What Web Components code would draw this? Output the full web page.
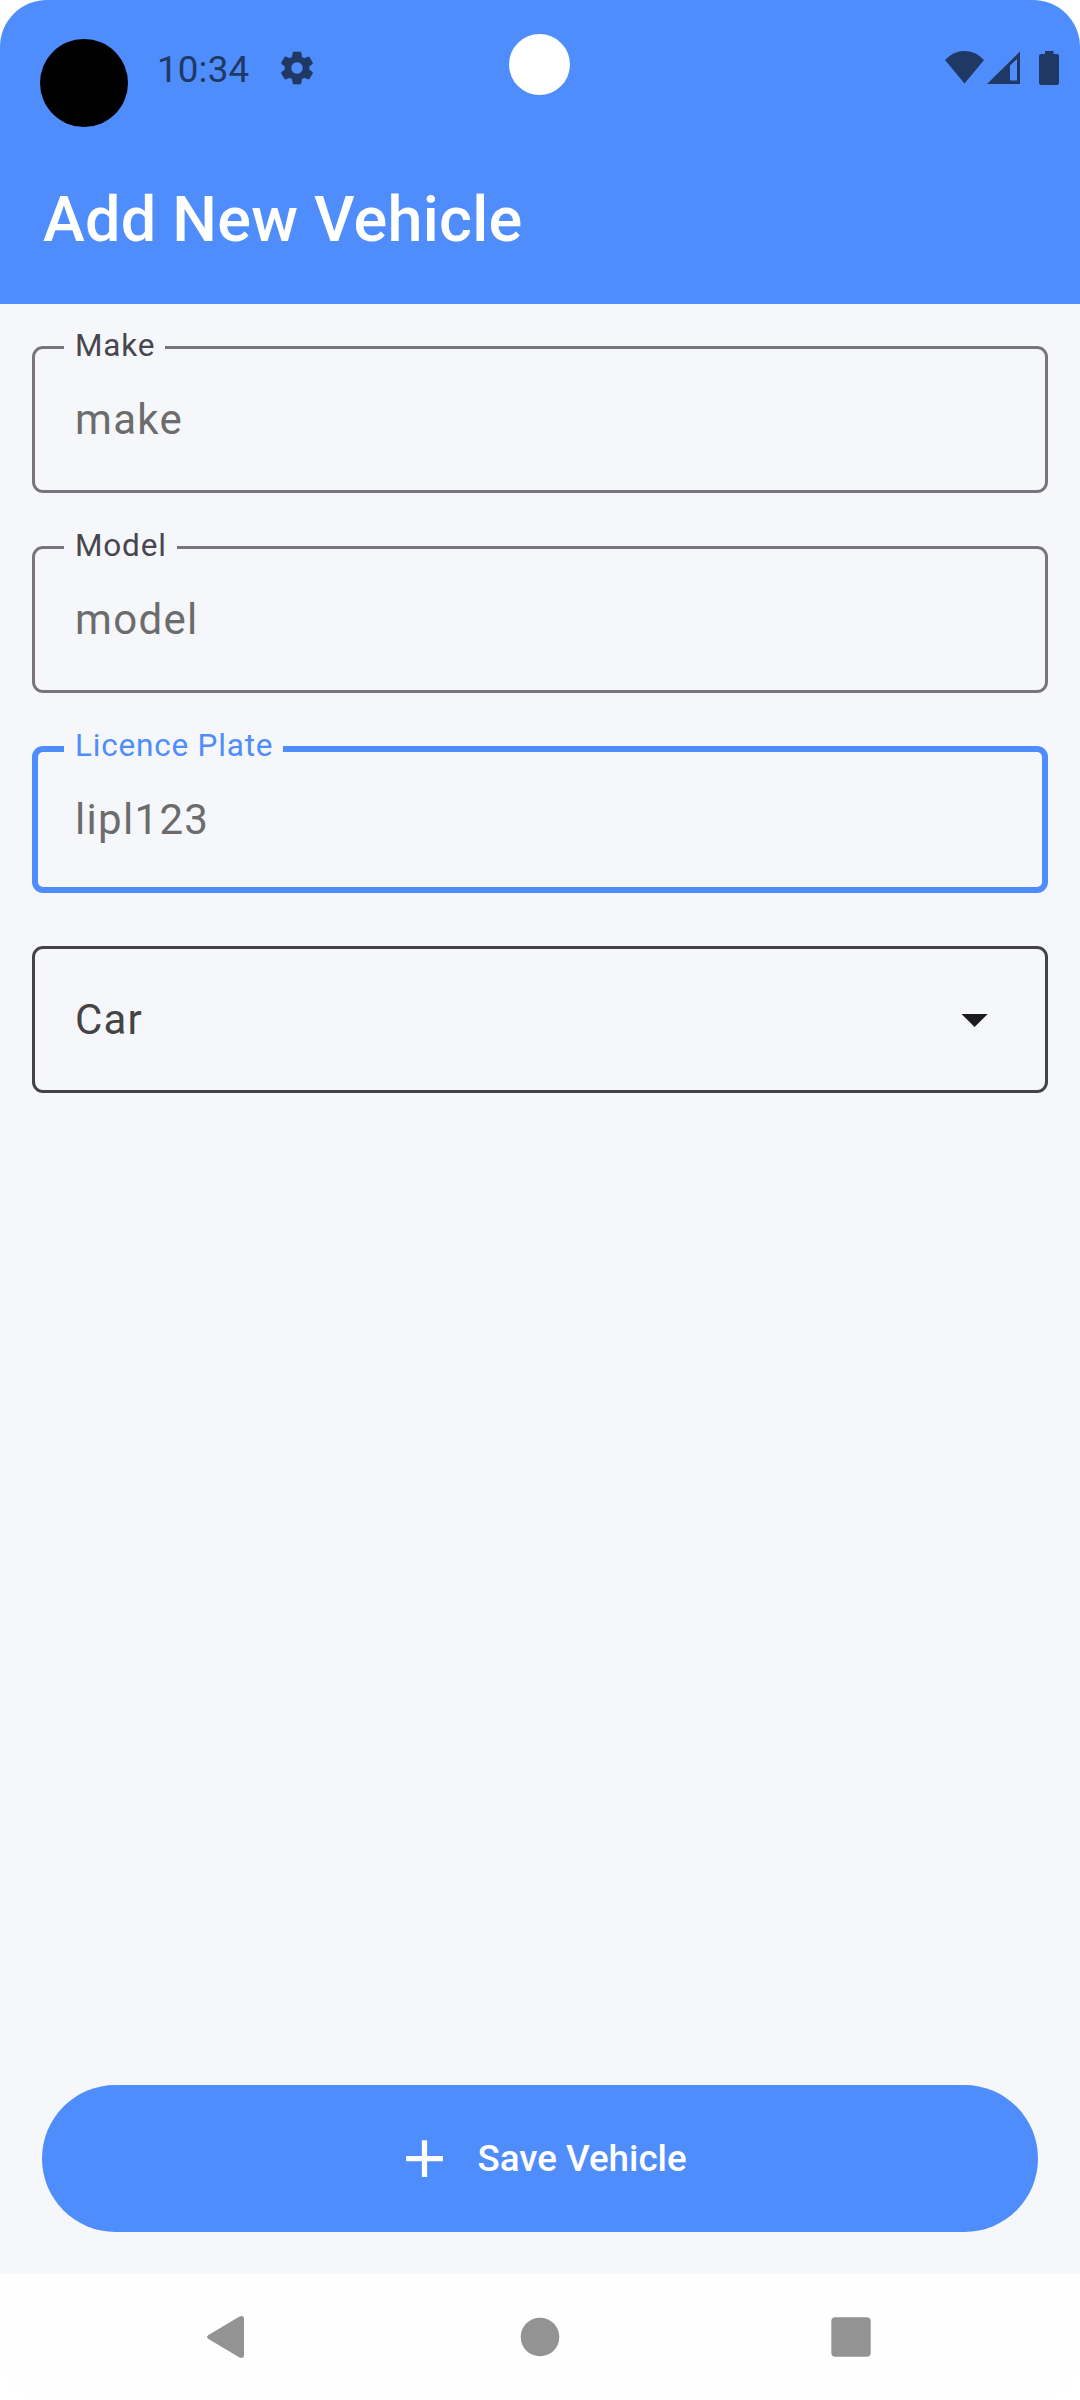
<!DOCTYPE html>
<html lang="en">
<head>
<meta charset="utf-8">
<title>Add New Vehicle</title>
<style>
  body { margin: 0; background: #fff; font-family: Roboto, sans-serif; }
</style>
</head>
<body>
<vehicle-screen>
  <status-bar slot="top" time="10:34"></status-bar>
  <app-header slot="top">Add New Vehicle</app-header>
  <outlined-field label="Make">make</outlined-field>
  <outlined-field label="Model">model</outlined-field>
  <outlined-field label="Licence Plate" focused>lipl123</outlined-field>
  <select-field>Car</select-field>
  <primary-button slot="action">Save Vehicle</primary-button>
  <nav-bar slot="bottom"></nav-bar>
</vehicle-screen>
<script>
const define = (name, html, setup) => {
  const template = document.createElement('template');
  template.innerHTML = html;
  customElements.define(name, class extends HTMLElement {
    constructor() {
      super();
      this.attachShadow({ mode: 'open' }).append(template.content.cloneNode(true));
    }
    connectedCallback() { if (setup) setup(this, this.shadowRoot); }
  });
};

define('vehicle-screen', `
<style>
  :host { --primary: #4f8dfd; --surface: #f5f7fb; --ink: #203864;
    display: flex; flex-direction: column; width: 1080px; height: 2400px;
    overflow: hidden; border-radius: 47px; background: var(--surface); }
  .top { height: 304px; background: var(--primary); }
  main { flex: 1; display: flex; flex-direction: column; gap: 53px; padding: 42px 32px 0; }
  .action { padding: 0 42px 42px; }
</style>
<div class="top"><slot name="top"></slot></div>
<main><slot></slot></main>
<div class="action"><slot name="action"></slot></div>
<slot name="bottom"></slot>`);

define('status-bar', `
<style>
  :host { display: flex; height: 136px; position: relative; color: var(--ink); box-sizing: border-box; padding: 39px 21px 0 40px; }
  .dot { width: 88px; height: 88px; border-radius: 50%; background: #000; }
  .time { margin: 9px 0 0 29px; font-size: 36.75px; line-height: 43px; width: 93px; letter-spacing: .15px; white-space: nowrap; }
  svg { display: block; fill: currentColor; }
  .gear { margin: 9px 0 0 27px; stroke: currentColor; stroke-width: .4; }
  .camera { position: absolute; left: 509px; top: 34px; width: 61px; height: 61px; border-radius: 50%; background: #fff; }
  .right { margin: 11px 0 0 auto; }
</style>
<div class="dot"></div>
<span class="time"></span>
<svg class="gear" width="40" height="40" viewBox="0 0 24 24"><path d="M19.14 12.94c.04-.3.06-.61.06-.94 0-.32-.02-.64-.07-.94l2.03-1.58a.49.49 0 0 0 .12-.61l-1.92-3.32a.488.488 0 0 0-.59-.22l-2.39.96c-.5-.38-1.03-.7-1.62-.94l-.36-2.54a.484.484 0 0 0-.48-.41h-3.84c-.24 0-.43.17-.47.41l-.36 2.54c-.59.24-1.13.57-1.62.94l-2.39-.96c-.22-.08-.47 0-.59.22L2.74 8.87c-.12.21-.08.47.12.61l2.03 1.58c-.05.3-.09.63-.09.94s.02.64.07.94l-2.03 1.58a.49.49 0 0 0-.12.61l1.92 3.32c.12.22.37.29.59.22l2.39-.96c.5.38 1.03.7 1.62.94l.36 2.54c.05.24.24.41.48.41h3.84c.24 0 .44-.17.47-.41l.36-2.54c.59-.24 1.13-.56 1.62-.94l2.39.96c.22.08.47 0 .59-.22l1.92-3.32c.12-.22.07-.47-.12-.61l-2.01-1.58zM12 15.6c-1.98 0-3.6-1.62-3.6-3.6s1.62-3.6 3.6-3.6 3.6 1.62 3.6 3.6-1.62 3.6-3.6 3.6z"/></svg>
<div class="camera"></div>
<svg class="right" width="114" height="36" viewBox="945 50 114 36">
  <path d="M945 60Q953.500 51 964.500 51T984 60L964.500 83.500Z"/>
  <path fill-rule="evenodd" d="M987 84L1020 51.500V84ZM1010 65.500V80.500H1017V59Z"/>
  <path d="M1045 51H1053.500V54H1057Q1059 54 1059 56V83Q1059 85 1057 85H1041Q1039 85 1039 83V56Q1039 54 1041 54H1045Z"/>
</svg>`, (el, root) => { root.querySelector('.time').textContent = el.getAttribute('time'); });

define('app-header', `
<style>
  :host { display: flex; align-items: center; height: 168px; padding: 0 43px; color: #fff; }
  h1 { margin: 0; font-size: 63px; font-weight: 500; line-height: 84px; letter-spacing: .22px; white-space: nowrap; }
</style>
<h1><slot></slot></h1>`);

define('outlined-field', `
<style>
  :host { display: flex; align-items: center; position: relative; box-sizing: border-box; height: 147px; padding-left: 40px;
    border: 3px solid #79747e; border-radius: 11px; color: #6c6c6c; font-size: 42px; letter-spacing: 1.31px; line-height: 63px; }
  :host([focused]) { border: 6px solid var(--primary); padding-left: 37px; }
  .label { position: absolute; left: 29px; top: -24px; padding: 0 10px 0 11px; background: var(--surface);
    color: #49454f; font-size: 31.5px; letter-spacing: .8px; line-height: 42px; white-space: nowrap; }
  :host([focused]) .label { left: 26px; top: -27px; color: var(--primary); }
</style>
<span class="label"></span><span><slot></slot></span>`, (el, root) => { root.querySelector('.label').textContent = el.getAttribute('label'); });

define('select-field', `
<style>
  :host { display: flex; align-items: center; justify-content: space-between; box-sizing: border-box; height: 147px; padding: 0 57px 0 40px;
    border: 3px solid #444; border-radius: 11px; color: #444; font-size: 42px; letter-spacing: 1.1px; line-height: 63px; }
  svg { display: block; fill: #1c1b1f; margin-top: 2px; }
</style>
<span><slot></slot></span>
<svg width="27" height="13" viewBox="0 0 27 13"><path d="M.5 0H26.700L13.600 13Z"/></svg>`);

define('primary-button', `
<style>
  :host { display: flex; align-items: center; justify-content: center; height: 147px; border-radius: 74px; background: var(--primary);
    color: #fff; font-size: 36.75px; font-weight: 500; line-height: 52px; }
  svg { display: block; fill: #fff; margin-right: 21px; }
</style>
<svg width="63" height="63" viewBox="0 0 24 24"><path d="M19 13h-6v6h-2v-6H5v-2h6V5h2v6h6z"/></svg>
<span><slot></slot></span>`);

define('nav-bar', `
<style>
  :host { display: flex; align-items: center; justify-content: space-between; box-sizing: border-box; height: 126px; padding: 0 209px; background: #fefefe; }
  svg { display: block; fill: #939393; overflow: visible; }
</style>
<svg width="40" height="44" viewBox="3 0 40 44"><path d="M2.500 20L33.500 1.500Q38 0 38 4V40Q38 44 33.500 42.500L2.500 24Q-.5 22 2.500 20Z"/></svg>
<svg width="40" height="40" viewBox="0 0 40 40"><circle cx="20" cy="20" r="19.300"/></svg>
<svg width="40" height="40" viewBox="0 0 40 40"><rect x=".3" y=".3" width="39.400" height="39.400" rx="4"/></svg>`);
</script>
</body>
</html>
